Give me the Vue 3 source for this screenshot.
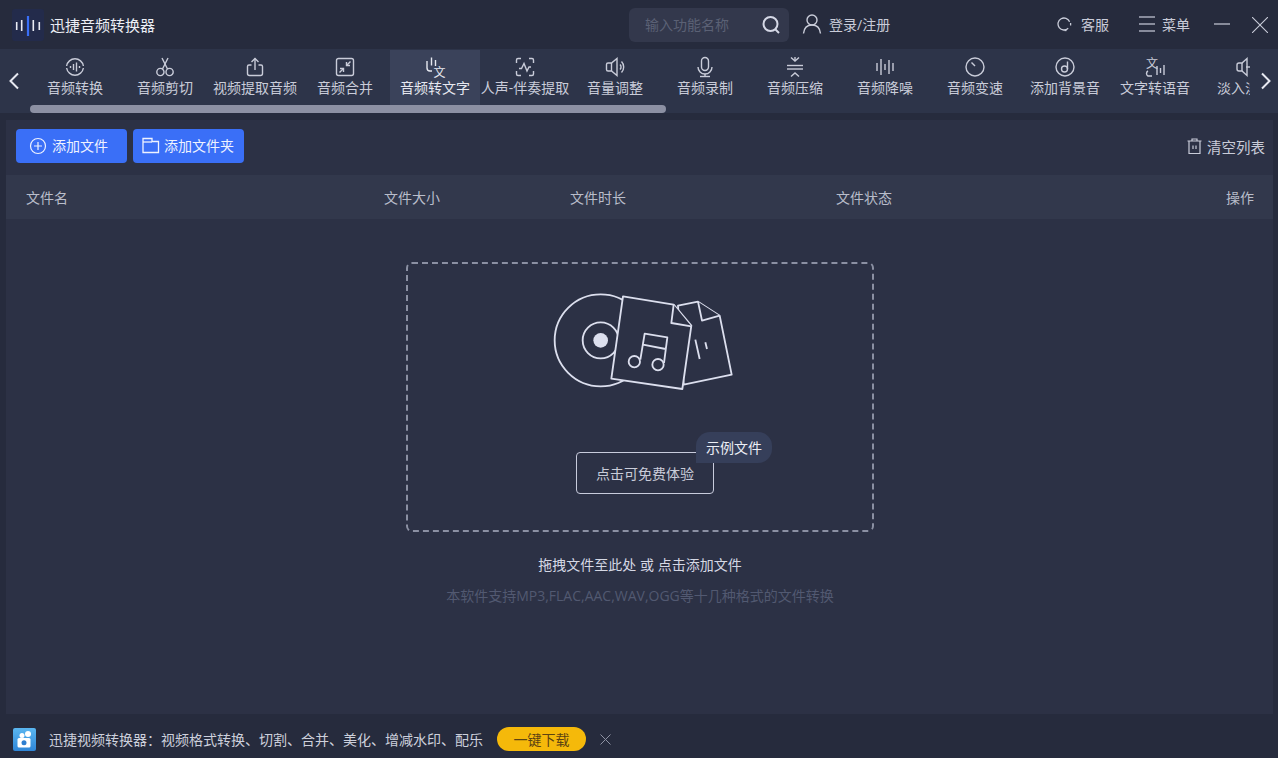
<script setup>
const tools = [
  { label: '音频转换', paths: ['M3.6 11A8.5 8.5 0 0 1 20.4 11', 'M20.4 13A8.5 8.5 0 0 1 3.6 13', 'M7.5 11v2', 'M10.5 9v6', 'M13.5 7.5v9', 'M16.5 11v2'] },
  { label: '音频剪切', paths: ['M3.8 17a3.6 3.6 0 1 0 7.2 0a3.6 3.6 0 1 0-7.2 0', 'M13 17a3.6 3.6 0 1 0 7.2 0a3.6 3.6 0 1 0-7.2 0', 'M9.5 14L15 3', 'M14.5 14L9 3'] },
  { label: '视频提取音频', paths: ['M8.5 10H6a1.5 1.5 0 0 0-1.5 1.5v7a2 2 0 0 0 2 2h11a2 2 0 0 0 2-2v-7A1.5 1.5 0 0 0 18 10h-2.5', 'M12 15V3.5', 'M8.5 7L12 3.5L15.5 7'] },
  { label: '音频合并', paths: ['M5.5 3.5h13a2 2 0 0 1 2 2v13a2 2 0 0 1-2 2h-13a2 2 0 0 1-2-2v-13a2 2 0 0 1 2-2z', 'M17.5 6.5L13.5 10.5', 'M13.5 7v3.5H17', 'M6.5 17.5L10.5 13.5', 'M10.5 17v-3.5H7'] },
  { label: '音频转文字', paths: ['M4 6v7a3 3 0 0 0 3 3h2', 'M8.5 2.5v8', 'M12.5 5v6'], glyph: { text: '文', x: 10.5, y: 21.5 }, active: true },
  { label: '人声-伴奏提取', paths: ['M3.5 8V5a1.5 1.5 0 0 1 1.5-1.5h3', 'M16 3.5h3A1.5 1.5 0 0 1 20.5 5v3', 'M20.5 16v3a1.5 1.5 0 0 1-1.5 1.5h-3', 'M8 20.5H5A1.5 1.5 0 0 1 3.5 19v-3', 'M6 13.5h2.5l2.5-5l3 7.5l2-4h2'] },
  { label: '音量调整', paths: ['M5 8h3.5L14 3.5v17L8.5 16H5a1.5 1.5 0 0 1-1.5-1.5v-5A1.5 1.5 0 0 1 5 8z', 'M8.5 8v8', 'M17 9.5a3.5 3.5 0 0 1 0 5', 'M18.5 6.5a8 8 0 0 1 0 11'] },
  { label: '音频录制', paths: ['M12 2.5a3.5 3.5 0 0 1 3.5 3.5v6a3.5 3.5 0 0 1-7 0v-6a3.5 3.5 0 0 1 3.5-3.5z', 'M5 12a7 7 0 0 0 14 0', 'M12 19v2.5', 'M7 21.5h10'] },
  { label: '音频压缩', paths: ['M8 2.5l4 3.5l4-3.5', 'M12 2v4', 'M4 10.5h16', 'M4 14h16', 'M8 21.5l4-3.5l4 3.5'] },
  { label: '音频降噪', paths: ['M4 8v8', 'M8 4v16', 'M12 9v6', 'M16 5v14', 'M20 8v8'] },
  { label: '音频变速', paths: ['M3 12a9 9 0 1 0 18 0a9 9 0 1 0-18 0', 'M8.5 7.5L12 11'] },
  { label: '添加背景音', paths: ['M3 12a9 9 0 1 0 18 0a9 9 0 1 0-18 0', 'M8.5 14a3 3 0 1 0 6 0a3 3 0 1 0-6 0', 'M14.5 14V6.5'] },
  { label: '文字转语音', paths: ['M5 16c-2 1-2 4 0 5h4', 'M14 11v9', 'M17.5 13v5', 'M21 10v10'], glyph: { text: '文', x: 3, y: 13 } },
  { label: '淡入淡出', paths: ['M6 8h3l5-4.5v17L9 16H6a2 2 0 0 1-2-2v-4a2 2 0 0 1 2-2z', 'M9 8v8', 'M13 12h7', 'M17.5 9.5L20 12l-2.5 2.5'] },
]

const columns = ['文件大小', '文件时长', '文件状态']
</script>

<template>
  <div class="app">
    <header class="titlebar">
      <div class="logo">
        <svg width="32" height="32" viewBox="0 0 32 32">
          <rect width="32" height="32" rx="3" fill="#232b4b" />
          <path d="M4.7 13v8M9.7 11v11M21.3 11v11M27.3 13v8" stroke="#e9ebf4" stroke-width="1.6" fill="none" />
          <path d="M16 7v20" stroke="#3a6ff7" stroke-width="2.2" fill="none" />
        </svg>
      </div>
      <span class="app-name">迅捷音频转换器</span>

      <div class="search">
        <span class="search__hint">输入功能名称</span>
        <svg class="search__icon" width="22" height="22" viewBox="0 0 22 22" fill="none" stroke="currentColor" stroke-width="2">
          <circle cx="10.5" cy="10" r="7" />
          <path d="M15.5 15.5L19 19" />
        </svg>
      </div>
      <button class="bar-link login">
        <svg width="22" height="22" viewBox="0 0 22 22" fill="none" stroke="currentColor" stroke-width="1.4">
          <circle cx="11" cy="7" r="5" />
          <path d="M2.5 20.5c.5-5 3.5-8.5 8.5-8.5s8 3.5 8.5 8.5" />
        </svg>
        登录/注册
      </button>

      <button class="bar-link service">
        <svg width="16" height="16" viewBox="0 0 16 16" fill="none" stroke="currentColor" stroke-width="1.3">
          <path d="M11.2 12.3A6 6 0 1 1 12.6 5.8" />
          <path d="M13.6 7v2.5" />
          <path d="M9.500 14.500h-2" />
        </svg>
        客服
      </button>
      <button class="bar-link menu">
        <svg width="16" height="16" viewBox="0 0 16 16" fill="none" stroke="#a9adbc" stroke-width="1.3">
          <path d="M0 1h16M0 8h16M0 15h16" />
        </svg>
        菜单
      </button>
      <svg class="win-btn win-btn--min" width="16" height="16" viewBox="0 0 16 16" fill="none" stroke="currentColor" stroke-width="1.2">
        <path d="M0 7h16" />
      </svg>
      <svg class="win-btn" width="16" height="16" viewBox="0 0 16 16" fill="none" stroke="currentColor" stroke-width="1.1">
        <path d="M0 0L16 16M16 0L0 16" />
      </svg>
    </header>

    <nav class="toolbar">
      <button class="toolbar__arrow">
        <svg width="12" height="18" viewBox="0 0 12 18" fill="none" stroke="currentColor" stroke-width="2">
          <path d="M10 1.5L2.5 9L10 16.5" />
        </svg>
      </button>
      <div class="toolbar__center">
        <div class="tools">
          <div v-for="tool in tools" :key="tool.label" class="tool" :class="{ 'tool--active': tool.active }">
            <svg class="tool__icon" width="24" height="24" viewBox="0 0 24 24" fill="none" stroke="currentColor" stroke-width="1.4">
              <path v-for="d in tool.paths" :key="d" :d="d" />
              <text v-if="tool.glyph" :x="tool.glyph.x" :y="tool.glyph.y" class="tool__glyph">{{ tool.glyph.text }}</text>
            </svg>
            <span class="tool__label">{{ tool.label }}</span>
          </div>
        </div>
        <div class="scroll-thumb"></div>
      </div>
      <button class="toolbar__arrow toolbar__arrow--next">
        <svg width="12" height="18" viewBox="0 0 12 18" fill="none" stroke="currentColor" stroke-width="2">
          <path d="M2 1.5L9.5 9L2 16.5" />
        </svg>
      </button>
    </nav>

    <main class="panel">
      <div class="actions">
        <button class="add-btn">
          <svg width="18" height="18" viewBox="0 0 18 18" fill="none" stroke="currentColor" stroke-width="1.2">
            <circle cx="9" cy="9" r="7.5" />
            <path d="M9 5v8M5 9h8" />
          </svg>
          <span class="add-btn__text">添加文件</span>
        </button>
        <button class="add-btn">
          <svg width="18" height="18" viewBox="0 0 18 18" fill="none" stroke="currentColor" stroke-width="1.3">
            <path d="M1 1.5h9v3h6.5V15.5H1z" />
            <path d="M1 5h9" />
          </svg>
          <span class="add-btn__text">添加文件夹</span>
        </button>
        <button class="clear-btn">
          <svg width="16" height="18" viewBox="0 0 16 18" fill="none" stroke="currentColor" stroke-width="1.2">
            <path d="M1.5 4h14M6 4V2h5v2M3 4v12.500h11V4M7 8.500v3.500M10 8.500v3.500" />
          </svg>
          清空列表
        </button>
      </div>

      <div class="table-head">
        <span class="col col--name">文件名</span>
        <span v-for="name in columns" :key="name" class="col">{{ name }}</span>
        <span class="col col--op">操作</span>
      </div>

      <section class="drop">
        <div class="drop__box">
          <svg class="drop__art" width="180" height="100" viewBox="70 40 540 300" fill="#2c3145" stroke="#dcdfee" stroke-width="5.5" stroke-linejoin="round">
            <circle cx="213" cy="182" r="138" />
            <circle cx="213" cy="182" r="54" />
            <circle cx="213" cy="182" r="22" fill="#dcdfee" stroke="none" />
            <path d="M445 78L505 66L570 108L606 285L462 315z" />
            <path d="M505 66L517 123L570 108" />
            <path d="M497 180L510 238M527 188L532 208" />
            <path d="M280 50L432 75L485 138L458 328L245 297z" />
            <path d="M432 75L425 130L485 140" />
            <path d="M332 240L345 162L413 173L403 250M340 195L408 208" fill="none" />
            <circle cx="314" cy="246" r="17" />
            <circle cx="385" cy="255" r="17" />
          </svg>
          <div class="trial">
            <button class="trial__btn">点击可免费体验</button>
            <span class="trial__badge">示例文件</span>
          </div>
        </div>
        <p class="drop__tip">拖拽文件至此处 或 点击添加文件</p>
        <p class="drop__formats">本软件支持MP3,FLAC,AAC,WAV,OGG等十几种格式的文件转换</p>
      </section>
    </main>

    <footer class="promo">
      <svg class="promo__icon" width="23" height="23" viewBox="0 0 23 23">
        <defs>
          <linearGradient id="promo-bg" x1="0" y1="0" x2="0" y2="1">
            <stop offset="0" stop-color="#5ab6f0" />
            <stop offset="1" stop-color="#2f86d8" />
          </linearGradient>
        </defs>
        <rect width="23" height="23" rx="2" fill="url(#promo-bg)" />
        <circle cx="9" cy="7.500" r="2.500" fill="#fff" />
        <circle cx="15" cy="6" r="3" fill="#fff" />
        <rect x="4.500" y="10" width="13" height="9.500" rx="1.500" fill="#fff" />
        <circle cx="11" cy="14.800" r="2.500" fill="#2f7fd0" />
      </svg>
      <span class="promo__text">迅捷视频转换器：视频格式转换、切割、合并、美化、增减水印、配乐</span>
      <button class="promo__btn">一键下载</button>
      <svg class="promo__close" width="11" height="11" viewBox="0 0 11 11" fill="none" stroke="currentColor" stroke-width="1">
        <path d="M.5.5L10.5 10.5M10.5.5L.5 10.5" />
      </svg>
    </footer>
  </div>
</template>

<style>
body {
  margin: 0;
  background: #262b3d;
}
</style>

<style scoped>
.app {
  width: 1278px;
  height: 758px;
  display: flex;
  flex-direction: column;
  overflow: hidden;
  background: #262b3d;
  color: #c9ccd9;
  font-family: "Open Sans", "Noto Sans CJK SC", sans-serif;
  font-size: 14px;
}

button {
  border: 0;
  padding: 0;
  background: none;
  color: inherit;
  font: inherit;
  cursor: pointer;
}

.titlebar {
  height: 49px;
  flex-shrink: 0;
  display: flex;
  align-items: center;
  padding: 0 10px 0 12px;
}

.logo {
  height: 32px;
}

.app-name {
  margin-left: 6px;
  padding-bottom: 1px;
  font-size: 15px;
  color: #eceef5;
}

.search {
  margin-left: 474px;
  width: 160px;
  height: 34px;
  box-sizing: border-box;
  padding: 0 7px 0 16px;
  display: flex;
  align-items: center;
  justify-content: space-between;
  background: #33384c;
  border-radius: 6px;
}

.search__hint {
  padding-bottom: 1px;
  font-size: 14px;
  color: #5b6175;
}

.search__icon {
  color: #d5d8e6;
}

.bar-link {
  display: flex;
  align-items: center;
  gap: 6px;
  padding-bottom: 2px;
  white-space: nowrap;
}

.login {
  margin-left: 12px;
}

.service {
  margin-left: auto;
  gap: 8px;
}

.menu {
  margin-left: 30px;
  gap: 7px;
}

.win-btn {
  margin-left: 22px;
  color: #c9ccd9;
}

.win-btn--min {
  margin-left: 24px;
}

.toolbar {
  height: 64px;
  flex-shrink: 0;
  display: flex;
  background: #2d3449;
}

.toolbar__arrow {
  width: 30px;
  flex-shrink: 0;
  display: flex;
  align-items: center;
  justify-content: center;
  color: #e6e8f0;
  padding-right: 2px;
  box-sizing: border-box;
}

.toolbar__arrow--next {
  width: 28px;
  padding-right: 0;
  padding-left: 4px;
}

.toolbar__center {
  flex: 1;
  min-width: 0;
  overflow: hidden;
}

.tools {
  display: flex;
  margin-top: 1px;
}

.tool {
  width: 90px;
  height: 55px;
  flex-shrink: 0;
  display: flex;
  flex-direction: column;
  align-items: center;
  padding-top: 5px;
  box-sizing: border-box;
  white-space: nowrap;
}

.tool--active {
  background: #3a425a;
  color: #e6e8f0;
}

.tool__icon {
  display: block;
  flex-shrink: 0;
}

.tool__glyph {
  font-size: 12px;
  fill: currentColor;
  stroke: none;
}

.tool__label {
  margin-top: -1px;
  line-height: 20px;
}

.scroll-thumb {
  width: 636px;
  height: 8px;
  background: #8c90a3;
  border-radius: 4px;
}

.panel {
  flex: 1;
  min-height: 0;
  margin: 7px 5px 0 6px;
  display: flex;
  flex-direction: column;
  background: #2c3145;
}

.actions {
  height: 55px;
  flex-shrink: 0;
  display: flex;
  align-items: flex-start;
  gap: 6px;
  padding: 9px 8px 0 10px;
  box-sizing: border-box;
}

.add-btn {
  width: 111px;
  height: 34px;
  display: flex;
  align-items: center;
  gap: 5px;
  padding-left: 13px;
  box-sizing: border-box;
  border-radius: 4px;
  background: #3a6ff7;
  color: #eef2ff;
}

.add-btn + .add-btn {
  padding-left: 9px;
  gap: 4px;
}

.add-btn__text {
  padding-bottom: 2px;
}

.clear-btn {
  margin-left: auto;
  height: 34px;
  display: flex;
  align-items: center;
  gap: 5px;
  font-size: 14.5px;
}

.table-head {
  height: 44px;
  flex-shrink: 0;
  display: grid;
  grid-template-columns: 358px 186px 266px 1fr auto;
  align-items: center;
  padding: 0 19px 0 20px;
  background: #32384c;
  color: #b9bdca;
}

.drop {
  flex: 1;
  min-height: 0;
  padding-top: 43px;
  padding-left: 1px;
  display: flex;
  flex-direction: column;
  align-items: center;
}

.drop__box {
  width: 468px;
  height: 270px;
  box-sizing: border-box;
  padding-top: 29px;
  display: flex;
  flex-direction: column;
  align-items: center;
  border: 2px dashed #8b90a3;
  border-radius: 6px;
}

.drop__art {
  display: block;
  margin-left: 5px;
}

.trial {
  position: relative;
  margin-top: 59px;
  margin-left: 10px;
}

.trial__btn {
  display: block;
  width: 138px;
  height: 42px;
  box-sizing: border-box;
  border: 1px solid #c8cbdc;
  border-radius: 4px;
  color: #c9ccd9;
}

.trial__badge {
  position: absolute;
  left: 120px;
  top: -20px;
  width: 76px;
  height: 31px;
  box-sizing: border-box;
  padding-bottom: 2px;
  display: flex;
  align-items: center;
  justify-content: center;
  background: #363f5a;
  border-radius: 14px 14px 14px 0;
  color: #eceef5;
}

.drop__tip {
  margin: 23px 0 0;
  font-size: 14px;
  line-height: 20px;
  color: #d5d8e4;
}

.drop__formats {
  margin: 11px 0 0;
  font-size: 14px;
  line-height: 20px;
  color: #525971;
}

.promo {
  height: 44px;
  flex-shrink: 0;
  display: flex;
  align-items: center;
  padding-left: 13px;
}

.promo__icon {
  margin-top: 6px;
}

.promo__text {
  margin-left: 13px;
  margin-top: 6px;
  white-space: nowrap;
  color: #cdd0dc;
}

.promo__btn {
  margin-left: 14px;
  margin-top: 6px;
  width: 89px;
  height: 24px;
  border-radius: 12px;
  background: #f5b90a;
  color: #5d4312;
}

.promo__close {
  margin-left: 14px;
  margin-top: 6px;
  color: #8e92a3;
}
</style>
